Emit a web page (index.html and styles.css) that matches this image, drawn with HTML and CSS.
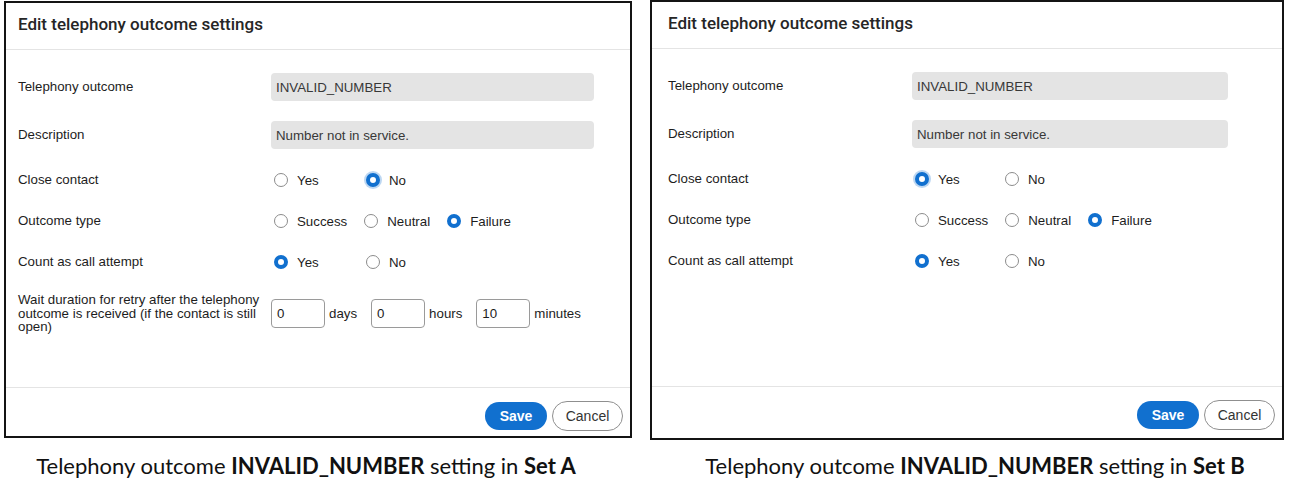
FILE: index.html
```html
<!DOCTYPE html>
<html lang="en">
<head>
<meta charset="utf-8">
<title>Telephony outcome settings</title>
<link rel="stylesheet" href="styles.css">
</head>
<body>
<div class="page">
  <figure class="figure figure-a">
    <section class="dialog">
      <header class="dialog-head"><h2 class="dialog-title">Edit telephony outcome settings</h2></header>
      <div class="dialog-body">
        <div class="row row-input">
          <div class="label">Telephony outcome</div>
          <div class="field readonly">INVALID_NUMBER</div>
        </div>
        <div class="row row-input">
          <div class="label">Description</div>
          <div class="field readonly">Number not in service.</div>
        </div>
        <div class="row row-radio">
          <div class="label">Close contact</div>
          <div class="radios">
            <span class="opt opt-wide"><span class="radio"></span>Yes</span>
            <span class="opt opt-wide"><span class="radio on focus"></span>No</span>
          </div>
        </div>
        <div class="row row-radio">
          <div class="label">Outcome type</div>
          <div class="radios">
            <span class="opt"><span class="radio"></span>Success</span>
            <span class="opt"><span class="radio"></span>Neutral</span>
            <span class="opt"><span class="radio on"></span>Failure</span>
          </div>
        </div>
        <div class="row row-radio">
          <div class="label">Count as call attempt</div>
          <div class="radios">
            <span class="opt opt-wide"><span class="radio on"></span>Yes</span>
            <span class="opt opt-wide"><span class="radio"></span>No</span>
          </div>
        </div>
        <div class="row row-wait">
          <div class="label label-wrap">Wait duration for retry after the telephony outcome is received (if the contact is still open)</div>
          <div class="durations">
            <span class="dur"><span class="box">0</span>days</span>
            <span class="dur"><span class="box">0</span>hours</span>
            <span class="dur"><span class="box">10</span>minutes</span>
          </div>
        </div>
      </div>
      <footer class="dialog-foot">
        <button class="btn btn-primary">Save</button>
        <button class="btn btn-secondary">Cancel</button>
      </footer>
    </section>
    <figcaption class="caption">Telephony outcome <b>INVALID_NUMBER</b> setting in <b>Set A</b></figcaption>
  </figure>

  <figure class="figure figure-b">
    <section class="dialog">
      <header class="dialog-head"><h2 class="dialog-title">Edit telephony outcome settings</h2></header>
      <div class="dialog-body">
        <div class="row row-input">
          <div class="label">Telephony outcome</div>
          <div class="field readonly">INVALID_NUMBER</div>
        </div>
        <div class="row row-input">
          <div class="label">Description</div>
          <div class="field readonly">Number not in service.</div>
        </div>
        <div class="row row-radio">
          <div class="label">Close contact</div>
          <div class="radios">
            <span class="opt opt-wide"><span class="radio on focus"></span>Yes</span>
            <span class="opt opt-wide"><span class="radio"></span>No</span>
          </div>
        </div>
        <div class="row row-radio">
          <div class="label">Outcome type</div>
          <div class="radios">
            <span class="opt"><span class="radio"></span>Success</span>
            <span class="opt"><span class="radio"></span>Neutral</span>
            <span class="opt"><span class="radio on"></span>Failure</span>
          </div>
        </div>
        <div class="row row-radio">
          <div class="label">Count as call attempt</div>
          <div class="radios">
            <span class="opt opt-wide"><span class="radio on"></span>Yes</span>
            <span class="opt opt-wide"><span class="radio"></span>No</span>
          </div>
        </div>
      </div>
      <footer class="dialog-foot">
        <button class="btn btn-primary">Save</button>
        <button class="btn btn-secondary">Cancel</button>
      </footer>
    </section>
    <figcaption class="caption">Telephony outcome <b>INVALID_NUMBER</b> setting in <b>Set B</b></figcaption>
  </figure>
</div>
</body>
</html>
```
FILE: styles.css
```css
* { box-sizing: border-box; }
html, body { margin: 0; padding: 0; background: #fff; }
body {
  width: 1289px;
  height: 488px;
  overflow: hidden;
  font-family: "Liberation Sans", Arial, sans-serif;
  color: #1d1d1d;
}
.page {
  display: flex;
  align-items: flex-start;
  padding-left: 4px;
  gap: 18px;
}
.figure {
  margin: 0;
  display: flex;
  flex-direction: column;
}
.figure-a {
  width: 628px;
  padding-top: 1px;
  --pad: 12px;
  --labelw: 253px;
  --inputw: 323px;
  --dlgh: 437px;
  --footh: 49px;
  --optw: 92px;
  --capshift: -12px;
  --capgap: 14px;
}
.figure-b {
  width: 634px;
  --pad: 16px;
  --labelw: 244px;
  --inputw: 316px;
  --dlgh: 440px;
  --footh: 52px;
  --optw: 90px;
  --capshift: 8px;
  --capgap: 12px;
}
.dialog {
  height: var(--dlgh);
  border: 2px solid #141414;
  display: flex;
  flex-direction: column;
  background: #fff;
}
.dialog-head {
  height: 47px;
  border-bottom: 1px solid #e4e4e4;
  padding: 0 var(--pad);
  display: flex;
  align-items: center;
  padding-bottom: 5px;
}
.dialog-title {
  margin: 0;
  font-family: Roboto, "Liberation Sans", sans-serif;
  font-weight: 500;
  font-size: 17px;
  color: #262626;
}
.dialog-body {
  flex: 1;
  padding: 23px var(--pad) 0;
  display: flex;
  flex-direction: column;
  gap: 21px;
}
.row {
  display: flex;
  align-items: center;
}
.row-input { height: 28px; }
.row-input + .row-input { margin-top: -1px; }
.row-radio { height: 20px; }
.label {
  width: var(--labelw);
  flex: none;
  font-size: 13.3px;
  line-height: 14px;
}
.label-wrap { width: 246px; margin-right: calc(var(--labelw) - 246px); line-height: 13.5px; }
.field {
  width: var(--inputw);
  height: 28px;
  border-radius: 4px;
  display: flex;
  align-items: center;
  padding-left: 5px;
  font-size: 13.3px;
}
.readonly {
  background: #e4e4e4;
  color: #383838;
}
.radios {
  display: flex;
  align-items: center;
  padding-left: 3px;
}
.opt {
  display: inline-flex;
  align-items: center;
  margin-right: 17px;
  font-size: 13.3px;
  color: #1d1d1d;
}
.opt-wide {
  width: var(--optw);
  margin-right: 0;
}
.radio {
  width: 14px;
  height: 14px;
  border-radius: 50%;
  border: 1px solid #8c8c8c;
  background: #fff;
  margin-right: 9px;
  flex: none;
}
.radio.on {
  border: 4px solid #1170cf;
}
.radio.focus {
  box-shadow: 0 0 0 2px rgba(17, 112, 207, 0.28);
}
.durations {
  display: flex;
  align-items: center;
}
.dur {
  display: inline-flex;
  align-items: center;
  font-size: 13.3px;
  margin-right: 14px;
}
.box {
  width: 54px;
  height: 29px;
  border: 1px solid #9a9a9a;
  border-radius: 4px;
  display: inline-flex;
  align-items: center;
  padding-left: 5px;
  margin-right: 4px;
  color: #1d1d1d;
}
.dialog-foot {
  height: var(--footh);
  border-top: 1px solid #e4e4e4;
  display: flex;
  justify-content: flex-end;
  align-items: flex-start;
  gap: 5px;
  padding-right: 7px;
  padding-top: 13px;
}
.btn {
  font-family: "Liberation Sans", Arial, sans-serif;
  font-size: 14px;
  border-radius: 15px;
  cursor: pointer;
}
.btn-primary {
  width: 62px;
  height: 28px;
  margin-top: 1px;
  background: #1170cf;
  color: #fff;
  border: none;
  font-weight: bold;
}
.btn-secondary {
  width: 71px;
  height: 30px;
  background: #fff;
  color: #333;
  border: 1px solid #8f8f8f;
}
.caption {
  margin-top: var(--capgap);
  text-align: center;
  font-family: Lato, "Open Sans", sans-serif;
  font-size: 22px;
  color: #111;
  transform: translateX(var(--capshift));
}
.caption b { font-weight: 700; }
```
